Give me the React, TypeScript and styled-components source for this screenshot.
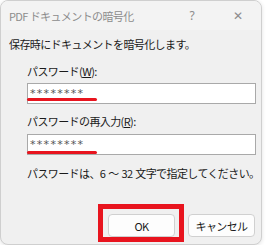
import styled, { createGlobalStyle } from "styled-components";

const GlobalStyle = createGlobalStyle`
  html, body {
    margin: 0;
    padding: 0;
    background: #ffffff;
  }
  body {
    font-family: "Noto Sans CJK JP", "Noto Sans", sans-serif;
    font-size: 11px;
    color: #1a1a1a;
  }
`;

const StyledDialog = styled.div`
  position: relative;
  width: 262px;
  height: 245px;
  box-sizing: border-box;
  border: 1px solid #cfcfcf;
  border-radius: 8px;
  overflow: hidden;
  background: #f0f0f0;
  display: flex;
  flex-direction: column;
  box-shadow: 0 1px 4px rgba(0, 0, 0, 0.12);
`;

const StyledTitleBar = styled.div`
  height: 29px;
  display: flex;
  align-items: center;
  background: #f3f3f3;
  color: #8c8c8c;
  font-size: 11px;
  letter-spacing: -0.6px;
`;

const StyledTitle = styled.span`
  flex: 1;
  padding-left: 8px;
`;

const StyledCaptionButton = styled.span`
  width: 46px;
  height: 29px;
  display: flex;
  align-items: center;
  justify-content: center;
  color: #8c8c8c;
  font-family: "Noto Sans", sans-serif;
  font-size: 12px;
  letter-spacing: 0;
`;

const StyledBody = styled.div`
  flex: 1;
  display: flex;
  flex-direction: column;
  padding: 6px 6px 7px 8px;
`;

const StyledText = styled.div<{ $indent?: boolean; $gap?: number }>`
  line-height: 16px;
  letter-spacing: -0.6px;
  word-spacing: 1px;
  margin-left: ${(p) => (p.$indent ? "18px" : "0")};
  margin-top: ${(p) => p.$gap ?? 0}px;
  white-space: pre;
`;

const StyledKey = styled.span`
  text-decoration: underline;
  text-underline-offset: 1px;
`;

const StyledInput = styled.div<{ $gap: number }>`
  position: relative;
  margin-left: 18px;
  margin-top: ${(p) => p.$gap}px;
  width: 229px;
  height: 21px;
  box-sizing: border-box;
  border: 1px solid #a9a9a9;
  background: #ffffff;
  display: flex;
  align-items: center;
  padding-left: 2px;
  font-family: "DejaVu Sans", sans-serif;
  font-size: 11px;
  letter-spacing: 1.3px;
  color: #555;
`;

const StyledMark = styled.span<{ $top: number }>`
  position: absolute;
  left: -1px;
  top: ${(p) => p.$top}px;
  width: 70px;
  height: 3px;
  border-radius: 2px;
  background: #e8141e;
`;

const StyledButtonRow = styled.div`
  margin-top: auto;
  display: flex;
  justify-content: flex-end;
  gap: 13px;
`;

const StyledButton = styled.button`
  position: relative;
  width: 67px;
  height: 23px;
  box-sizing: border-box;
  border: 1px solid #d0d0d0;
  border-radius: 4px;
  background: #fdfdfd;
  font-family: "Noto Sans CJK JP", "Noto Sans", sans-serif;
  font-size: 11px;
  letter-spacing: -0.6px;
  color: #1a1a1a;
  padding: 0;
`;

const StyledHighlight = styled.span`
  position: absolute;
  left: -11px;
  right: -10px;
  top: -11px;
  bottom: -6px;
  border: 5px solid #e8141e;
  pointer-events: none;
`;

function App() {
  return (
    <>
      <GlobalStyle />
      <StyledDialog>
        <StyledTitleBar>
          <StyledTitle>PDF ドキュメントの暗号化</StyledTitle>
          <StyledCaptionButton>?</StyledCaptionButton>
          <StyledCaptionButton>✕</StyledCaptionButton>
        </StyledTitleBar>
        <StyledBody>
          <StyledText>保存時にドキュメントを暗号化します。</StyledText>
          <StyledText $indent $gap={11}>
            パスワード(<StyledKey>W</StyledKey>):
          </StyledText>
          <StyledInput $gap={4}>
            ********
            <StyledMark $top={14} />
          </StyledInput>
          <StyledText $indent $gap={9}>
            パスワードの再入力(<StyledKey>R</StyledKey>):
          </StyledText>
          <StyledInput $gap={5}>
            ********
            <StyledMark $top={16} />
          </StyledInput>
          <StyledText $indent $gap={10}>
            {"パスワードは、6 ～ 32 文字で指定してください。"}
          </StyledText>
          <StyledButtonRow>
            <StyledButton>
              OK
              <StyledHighlight />
            </StyledButton>
            <StyledButton>キャンセル</StyledButton>
          </StyledButtonRow>
        </StyledBody>
      </StyledDialog>
    </>
  );
}

export default App;
